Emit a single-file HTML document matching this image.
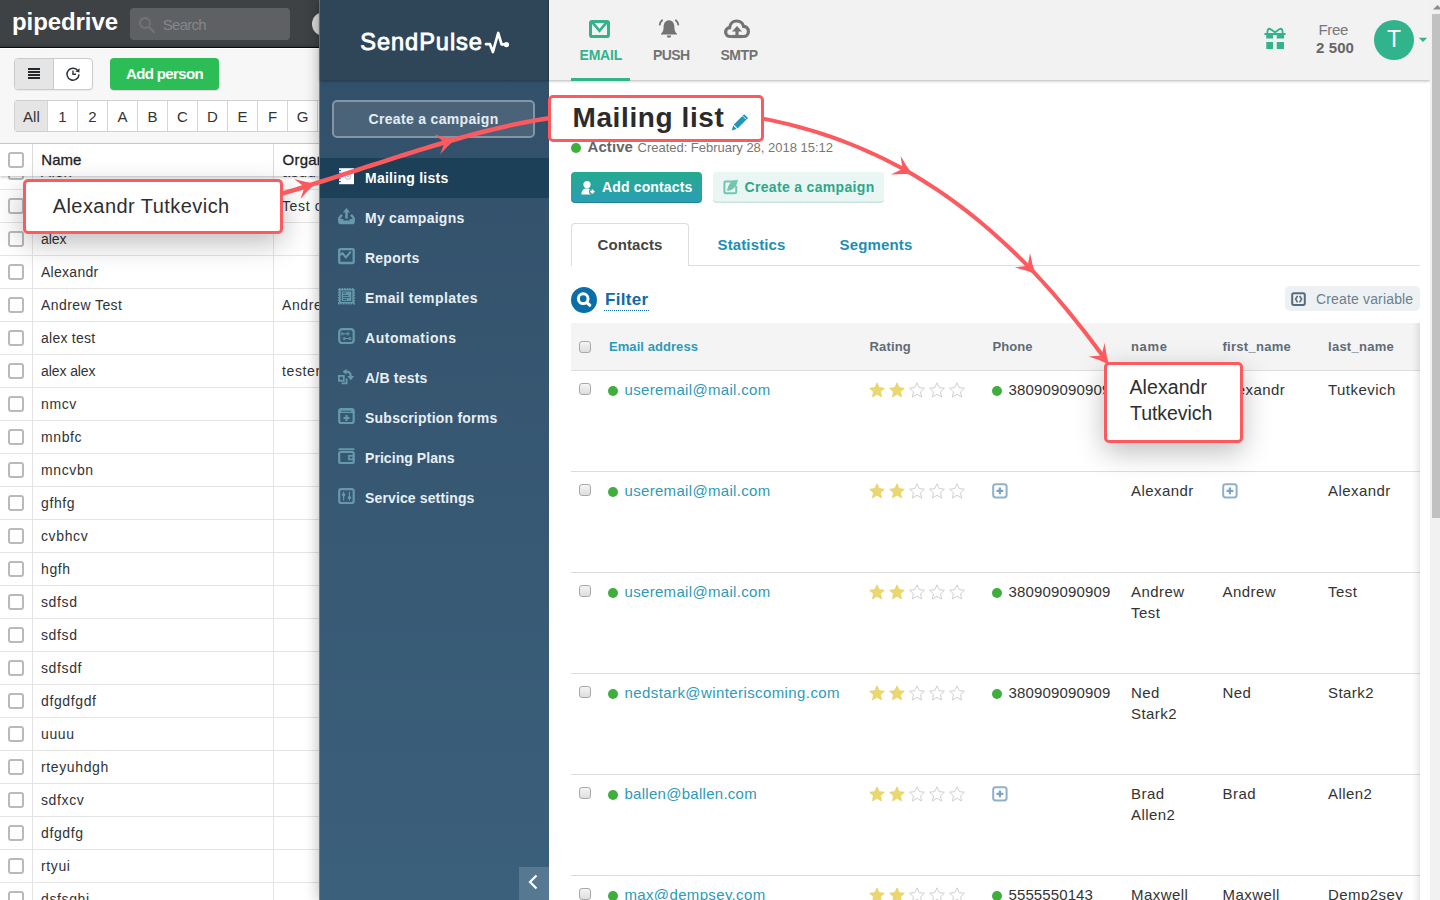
<!DOCTYPE html>
<html lang="en"><head><meta charset="utf-8"><title>Mailing list</title>
<style>
html,body{margin:0;padding:0}body{width:1440px;height:900px;overflow:hidden;position:relative;background:#fff;font-family:'Liberation Sans',sans-serif}
.l{position:absolute;left:0;top:0;width:1440px;height:900px;overflow:hidden}
.l>div,.l>svg,.l>span{position:absolute;display:block}
.t{white-space:pre;line-height:20px}
</style></head>
<body>
<div class="l">
<div style="left:0px;top:0px;width:340px;height:900px;background:#fff"></div>
<div style="left:0px;top:0px;width:340px;height:47px;background:linear-gradient(#3e4245 44px,#34373a 47px);border-bottom:1px solid #0c0d0e"></div>
<div style="left:0px;top:48px;width:340px;height:1px;background:#fff"></div>
<div style="left:130px;top:8px;width:160px;height:32px;background:#5e6064;border-radius:4px"></div>
<svg style="left:138px;top:16px" width="18" height="18" viewBox="0 0 18 18"><circle cx="7" cy="7" r="5" fill="none" stroke="#727477" stroke-width="1.9"/><path d="M10.8 10.8 L16 16" stroke="#727477" stroke-width="2.2" stroke-linecap="round"/></svg>
<div style="left:312px;top:12px;width:24px;height:24px;background:#d9d9d9;border-radius:50%"></div>
<div style="left:0px;top:49px;width:340px;height:94px;background:#f7f7f7"></div>
<div style="left:14px;top:58px;width:79px;height:32px;box-sizing:border-box;border:1px solid #cbcbcb;border-radius:4px;background:#fff;box-shadow:0 1px 1px rgba(0,0,0,.06)"></div>
<div style="left:15px;top:59px;width:38px;height:30px;background:#e5e5e5;border-right:1px solid #cbcbcb;border-radius:3px 0 0 3px"></div>
<svg style="left:28px;top:68px" width="12" height="12" viewBox="0 0 12 12"><path d="M0 1h12M0 4h12M0 7h12M0 10h12" stroke="#26292c" stroke-width="2"/></svg>
<svg style="left:65px;top:66px" width="16" height="16" viewBox="0 0 16 16"><path d="M13.2 5.2 A6 6 0 1 0 14 8.4" fill="none" stroke="#303336" stroke-width="1.5"/><path d="M14.6 2.2 L14.4 6.4 L10.4 5.6 Z" fill="#303336"/><path d="M8 4.5 V8.3 H11" fill="none" stroke="#303336" stroke-width="1.4"/></svg>
<div style="left:110px;top:58px;width:109px;height:32px;background:#2dbd57;border-radius:4px;box-shadow:0 1px 1px rgba(0,0,0,.12)"></div>
<div style="left:14px;top:100px;width:330px;height:32px;box-sizing:border-box;border:1px solid #cfcfcf;border-radius:3px;background:#fff"></div>
<div style="left:15px;top:101px;width:32px;height:30px;background:#e5e5e5;border-radius:2px 0 0 2px"></div>
<div style="left:47px;top:101px;width:1px;height:30px;background:#d6d6d6"></div>
<div style="left:77px;top:101px;width:1px;height:30px;background:#d6d6d6"></div>
<div style="left:107px;top:101px;width:1px;height:30px;background:#d6d6d6"></div>
<div style="left:137px;top:101px;width:1px;height:30px;background:#d6d6d6"></div>
<div style="left:167px;top:101px;width:1px;height:30px;background:#d6d6d6"></div>
<div style="left:197px;top:101px;width:1px;height:30px;background:#d6d6d6"></div>
<div style="left:227px;top:101px;width:1px;height:30px;background:#d6d6d6"></div>
<div style="left:257px;top:101px;width:1px;height:30px;background:#d6d6d6"></div>
<div style="left:287px;top:101px;width:1px;height:30px;background:#d6d6d6"></div>
<div style="left:317px;top:101px;width:1px;height:30px;background:#d6d6d6"></div>
<div style="left:0px;top:143px;width:340px;height:1px;background:#cfcfcf"></div>
<div style="left:8px;top:164px;width:16px;height:16px;box-sizing:border-box;border:2px solid #b9babb;border-radius:3px;background:#fff"></div>
<div style="left:0px;top:189px;width:340px;height:1px;background:#e4e4e4"></div>
<div style="left:8px;top:198px;width:16px;height:16px;box-sizing:border-box;border:2px solid #b9babb;border-radius:3px;background:#fff"></div>
<div style="left:0px;top:222px;width:340px;height:1px;background:#e4e4e4"></div>
<div style="left:8px;top:231px;width:16px;height:16px;box-sizing:border-box;border:2px solid #b9babb;border-radius:3px;background:#fff"></div>
<div style="left:0px;top:255px;width:340px;height:1px;background:#e4e4e4"></div>
<div style="left:8px;top:264px;width:16px;height:16px;box-sizing:border-box;border:2px solid #b9babb;border-radius:3px;background:#fff"></div>
<div style="left:0px;top:288px;width:340px;height:1px;background:#e4e4e4"></div>
<div style="left:8px;top:297px;width:16px;height:16px;box-sizing:border-box;border:2px solid #b9babb;border-radius:3px;background:#fff"></div>
<div style="left:0px;top:321px;width:340px;height:1px;background:#e4e4e4"></div>
<div style="left:8px;top:330px;width:16px;height:16px;box-sizing:border-box;border:2px solid #b9babb;border-radius:3px;background:#fff"></div>
<div style="left:0px;top:354px;width:340px;height:1px;background:#e4e4e4"></div>
<div style="left:8px;top:363px;width:16px;height:16px;box-sizing:border-box;border:2px solid #b9babb;border-radius:3px;background:#fff"></div>
<div style="left:0px;top:387px;width:340px;height:1px;background:#e4e4e4"></div>
<div style="left:8px;top:396px;width:16px;height:16px;box-sizing:border-box;border:2px solid #b9babb;border-radius:3px;background:#fff"></div>
<div style="left:0px;top:420px;width:340px;height:1px;background:#e4e4e4"></div>
<div style="left:8px;top:429px;width:16px;height:16px;box-sizing:border-box;border:2px solid #b9babb;border-radius:3px;background:#fff"></div>
<div style="left:0px;top:453px;width:340px;height:1px;background:#e4e4e4"></div>
<div style="left:8px;top:462px;width:16px;height:16px;box-sizing:border-box;border:2px solid #b9babb;border-radius:3px;background:#fff"></div>
<div style="left:0px;top:486px;width:340px;height:1px;background:#e4e4e4"></div>
<div style="left:8px;top:495px;width:16px;height:16px;box-sizing:border-box;border:2px solid #b9babb;border-radius:3px;background:#fff"></div>
<div style="left:0px;top:519px;width:340px;height:1px;background:#e4e4e4"></div>
<div style="left:8px;top:528px;width:16px;height:16px;box-sizing:border-box;border:2px solid #b9babb;border-radius:3px;background:#fff"></div>
<div style="left:0px;top:552px;width:340px;height:1px;background:#e4e4e4"></div>
<div style="left:8px;top:561px;width:16px;height:16px;box-sizing:border-box;border:2px solid #b9babb;border-radius:3px;background:#fff"></div>
<div style="left:0px;top:585px;width:340px;height:1px;background:#e4e4e4"></div>
<div style="left:8px;top:594px;width:16px;height:16px;box-sizing:border-box;border:2px solid #b9babb;border-radius:3px;background:#fff"></div>
<div style="left:0px;top:618px;width:340px;height:1px;background:#e4e4e4"></div>
<div style="left:8px;top:627px;width:16px;height:16px;box-sizing:border-box;border:2px solid #b9babb;border-radius:3px;background:#fff"></div>
<div style="left:0px;top:651px;width:340px;height:1px;background:#e4e4e4"></div>
<div style="left:8px;top:660px;width:16px;height:16px;box-sizing:border-box;border:2px solid #b9babb;border-radius:3px;background:#fff"></div>
<div style="left:0px;top:684px;width:340px;height:1px;background:#e4e4e4"></div>
<div style="left:8px;top:693px;width:16px;height:16px;box-sizing:border-box;border:2px solid #b9babb;border-radius:3px;background:#fff"></div>
<div style="left:0px;top:717px;width:340px;height:1px;background:#e4e4e4"></div>
<div style="left:8px;top:726px;width:16px;height:16px;box-sizing:border-box;border:2px solid #b9babb;border-radius:3px;background:#fff"></div>
<div style="left:0px;top:750px;width:340px;height:1px;background:#e4e4e4"></div>
<div style="left:8px;top:759px;width:16px;height:16px;box-sizing:border-box;border:2px solid #b9babb;border-radius:3px;background:#fff"></div>
<div style="left:0px;top:783px;width:340px;height:1px;background:#e4e4e4"></div>
<div style="left:8px;top:792px;width:16px;height:16px;box-sizing:border-box;border:2px solid #b9babb;border-radius:3px;background:#fff"></div>
<div style="left:0px;top:816px;width:340px;height:1px;background:#e4e4e4"></div>
<div style="left:8px;top:825px;width:16px;height:16px;box-sizing:border-box;border:2px solid #b9babb;border-radius:3px;background:#fff"></div>
<div style="left:0px;top:849px;width:340px;height:1px;background:#e4e4e4"></div>
<div style="left:8px;top:858px;width:16px;height:16px;box-sizing:border-box;border:2px solid #b9babb;border-radius:3px;background:#fff"></div>
<div style="left:0px;top:882px;width:340px;height:1px;background:#e4e4e4"></div>
<div style="left:8px;top:891px;width:16px;height:16px;box-sizing:border-box;border:2px solid #b9babb;border-radius:3px;background:#fff"></div>
<div style="left:32px;top:176px;width:1px;height:724px;background:#e4e4e4"></div>
<div style="left:273px;top:176px;width:1px;height:724px;background:#e4e4e4"></div>
<div style="left:0px;top:144px;width:340px;height:32px;background:#fff;box-shadow:0 1px 3px rgba(0,0,0,.25)"></div>
<div style="left:32px;top:144px;width:1px;height:32px;background:#dcdcdc"></div>
<div style="left:273px;top:144px;width:1px;height:32px;background:#dcdcdc"></div>
<div style="left:8px;top:152px;width:16px;height:16px;box-sizing:border-box;border:2px solid #b9babb;border-radius:3px;background:#fff"></div>
<span class="t" style="left:12.00px;top:12.18px;font-size:24px;font-weight:700;color:#fff;letter-spacing:-0.078px;">pipedrive</span>
<span class="t" style="left:162.80px;top:14.70px;font-size:15px;font-weight:400;color:#85878a;letter-spacing:-0.755px;">Search</span>
<span class="t" style="left:126.00px;top:64.00px;font-size:15px;font-weight:700;color:#fff;letter-spacing:-0.634px;">Add person</span>
<span class="t" style="left:23.00px;top:106.80px;font-size:15px;font-weight:400;color:#333;letter-spacing:0.109px;">All</span>
<span class="t" style="left:47.50px;top:106.80px;font-size:15px;font-weight:400;color:#333;letter-spacing:0.000px;width:30px;text-align:center;">1</span>
<span class="t" style="left:77.50px;top:106.80px;font-size:15px;font-weight:400;color:#333;letter-spacing:0.000px;width:30px;text-align:center;">2</span>
<span class="t" style="left:107.50px;top:106.80px;font-size:15px;font-weight:400;color:#333;letter-spacing:0.000px;width:30px;text-align:center;">A</span>
<span class="t" style="left:137.50px;top:106.80px;font-size:15px;font-weight:400;color:#333;letter-spacing:0.000px;width:30px;text-align:center;">B</span>
<span class="t" style="left:167.50px;top:106.80px;font-size:15px;font-weight:400;color:#333;letter-spacing:0.000px;width:30px;text-align:center;">C</span>
<span class="t" style="left:197.50px;top:106.80px;font-size:15px;font-weight:400;color:#333;letter-spacing:0.000px;width:30px;text-align:center;">D</span>
<span class="t" style="left:227.50px;top:106.80px;font-size:15px;font-weight:400;color:#333;letter-spacing:0.000px;width:30px;text-align:center;">E</span>
<span class="t" style="left:257.50px;top:106.80px;font-size:15px;font-weight:400;color:#333;letter-spacing:0.000px;width:30px;text-align:center;">F</span>
<span class="t" style="left:287.50px;top:106.80px;font-size:15px;font-weight:400;color:#333;letter-spacing:0.000px;width:30px;text-align:center;">G</span>
<span class="t" style="left:317.50px;top:106.80px;font-size:15px;font-weight:400;color:#333;letter-spacing:0.000px;width:30px;text-align:center;">H</span>
<span class="t" style="left:41.00px;top:162.30px;font-size:15px;font-weight:400;color:#333;letter-spacing:0.450px;clip-path:inset(13.7px 0 0 0);">Alex</span>
<span class="t" style="left:282.00px;top:162.30px;font-size:15px;font-weight:400;color:#333;letter-spacing:0.450px;clip-path:inset(13.7px 0 0 0);">asdd</span>
<span class="t" style="left:282.00px;top:196.35px;font-size:14px;font-weight:400;color:#303336;letter-spacing:0.620px;">Test c</span>
<span class="t" style="left:41.00px;top:229.35px;font-size:14px;font-weight:400;color:#303336;letter-spacing:-0.047px;">alex</span>
<span class="t" style="left:41.00px;top:262.35px;font-size:14px;font-weight:400;color:#303336;letter-spacing:0.279px;">Alexandr</span>
<span class="t" style="left:41.00px;top:295.35px;font-size:14px;font-weight:400;color:#303336;letter-spacing:0.411px;">Andrew Test</span>
<span class="t" style="left:282.00px;top:295.35px;font-size:14px;font-weight:400;color:#303336;letter-spacing:0.620px;">Andre</span>
<span class="t" style="left:41.00px;top:328.35px;font-size:14px;font-weight:400;color:#303336;letter-spacing:0.240px;">alex test</span>
<span class="t" style="left:41.00px;top:361.35px;font-size:14px;font-weight:400;color:#303336;letter-spacing:-0.085px;">alex alex</span>
<span class="t" style="left:282.00px;top:361.35px;font-size:14px;font-weight:400;color:#303336;letter-spacing:0.620px;">tester</span>
<span class="t" style="left:41.00px;top:394.35px;font-size:14px;font-weight:400;color:#303336;letter-spacing:0.620px;">nmcv</span>
<span class="t" style="left:41.00px;top:427.35px;font-size:14px;font-weight:400;color:#303336;letter-spacing:0.620px;">mnbfc</span>
<span class="t" style="left:41.00px;top:460.35px;font-size:14px;font-weight:400;color:#303336;letter-spacing:0.620px;">mncvbn</span>
<span class="t" style="left:41.00px;top:493.35px;font-size:14px;font-weight:400;color:#303336;letter-spacing:0.620px;">gfhfg</span>
<span class="t" style="left:41.00px;top:526.35px;font-size:14px;font-weight:400;color:#303336;letter-spacing:0.620px;">cvbhcv</span>
<span class="t" style="left:41.00px;top:559.35px;font-size:14px;font-weight:400;color:#303336;letter-spacing:0.620px;">hgfh</span>
<span class="t" style="left:41.00px;top:592.35px;font-size:14px;font-weight:400;color:#303336;letter-spacing:0.620px;">sdfsd</span>
<span class="t" style="left:41.00px;top:625.35px;font-size:14px;font-weight:400;color:#303336;letter-spacing:0.620px;">sdfsd</span>
<span class="t" style="left:41.00px;top:658.35px;font-size:14px;font-weight:400;color:#303336;letter-spacing:0.620px;">sdfsdf</span>
<span class="t" style="left:41.00px;top:691.35px;font-size:14px;font-weight:400;color:#303336;letter-spacing:0.620px;">dfgdfgdf</span>
<span class="t" style="left:41.00px;top:724.35px;font-size:14px;font-weight:400;color:#303336;letter-spacing:0.620px;">uuuu</span>
<span class="t" style="left:41.00px;top:757.35px;font-size:14px;font-weight:400;color:#303336;letter-spacing:0.620px;">rteyuhdgh</span>
<span class="t" style="left:41.00px;top:790.35px;font-size:14px;font-weight:400;color:#303336;letter-spacing:0.620px;">sdfxcv</span>
<span class="t" style="left:41.00px;top:823.35px;font-size:14px;font-weight:400;color:#303336;letter-spacing:0.620px;">dfgdfg</span>
<span class="t" style="left:41.00px;top:856.35px;font-size:14px;font-weight:400;color:#303336;letter-spacing:0.620px;">rtyui</span>
<span class="t" style="left:41.00px;top:889.35px;font-size:14px;font-weight:400;color:#303336;letter-spacing:0.620px;">dsfsghj</span>
<span class="t" style="left:41.30px;top:149.80px;font-size:15px;font-weight:400;color:#1e2226;letter-spacing:-0.004px;-webkit-text-stroke:0.3px #1e2226;">Name</span>
<span class="t" style="left:282.50px;top:149.80px;font-size:15px;font-weight:400;color:#1e2226;letter-spacing:0.250px;-webkit-text-stroke:0.3px #1e2226;">Organization</span>
</div>
<div class="l">
<div style="left:319px;top:0px;width:1121px;height:900px;background:#fff;box-shadow:-2px 0 12px rgba(0,0,0,.23)"></div>
<div style="left:319px;top:0px;width:1px;height:900px;background:#2b8de3"></div>
<div style="left:320px;top:0px;width:229px;height:900px;background:linear-gradient(#33506a 80px,#3b607c 900px)"></div>
<div style="left:320px;top:0px;width:229px;height:80px;background:#2f4558;box-shadow:0 1px 3px rgba(0,0,0,.35)"></div>
<svg style="left:484px;top:30px" width="28" height="26" viewBox="0 0 28 26"><path d="M2 14.2 H6 L8.9 22 L14.2 3 L17.6 14.3 H21" fill="none" stroke="#fff" stroke-width="2.7" stroke-linejoin="round" stroke-linecap="round"/><circle cx="22.4" cy="14.6" r="2.7" fill="#fff"/></svg>
<div style="left:332px;top:100px;width:203px;height:38px;box-sizing:border-box;border:2px solid #8496a5;border-radius:5px;background:#4b6379"></div>
<div style="left:320px;top:158px;width:229px;height:40px;background:#1c4058"></div>
<svg style="left:338px;top:167.8px" width="17" height="17" viewBox="0 0 17 17"><rect x="1" y="0.2" width="15" height="16" fill="#fff"/><path d="M0.6 2.6h2.2M0.6 5.4h2.2M0.6 10.8h2.2M0.6 13.6h2.2" stroke="#2a4bd0" stroke-width="1.1"/><circle cx="10" cy="8.6" r="2.7" fill="none" stroke="#9fb3c8" stroke-width="0.9"/><circle cx="10" cy="8.6" r="0.9" fill="#9fb3c8"/></svg>
<svg style="left:338px;top:207.8px" width="17" height="17" viewBox="0 0 17 17"><path d="M3.9 6.6 L1.3 10.2 V13.2 Q1.3 15.1 3.2 15.1 H13.8 Q15.7 15.1 15.7 13.2 V10.2 L13.1 6.6" fill="none" stroke="#6699ac" stroke-width="2.4" stroke-linejoin="round"/><path d="M1.5 11 H5.4 V12.6 H11.6 V11 H15.5 V14.6 H1.5Z" fill="#6699ac"/><path d="M8.5 10.6 V3.6" stroke="#6699ac" stroke-width="2.5"/><path d="M4.9 4.4 L8.5 0 L12.1 4.4 Z" fill="#6699ac"/></svg>
<svg style="left:338px;top:247.8px" width="17" height="17" viewBox="0 0 17 17"><rect x="1.2" y="1.2" width="14.5" height="13.8" rx="1" fill="none" stroke="#6699ac" stroke-width="2.3"/><path d="M1.6 7 L4.6 5.4 L7.8 9.4 L12.8 3.6" fill="none" stroke="#6699ac" stroke-width="2.1"/></svg>
<svg style="left:338px;top:287.8px" width="17" height="17" viewBox="0 0 17 17"><rect x="1" y="1" width="15" height="14.4" fill="#6699ac" stroke="#6699ac" stroke-width="2" stroke-dasharray="1.5 1.1"/><rect x="3.2" y="3" width="10.6" height="10.4" fill="none" stroke="#36566f" stroke-width="1"/><path d="M5 5.2h3.4M5 7.6h5.6M5 9.6h6.6M5 11.4h4" stroke="#36566f" stroke-width="1"/></svg>
<svg style="left:338px;top:327.8px" width="17" height="17" viewBox="0 0 17 17"><rect x="1.2" y="1.2" width="14.5" height="13.8" rx="3" fill="none" stroke="#6699ac" stroke-width="2.2"/><path d="M4 5.8h6M6 10.6h6" stroke="#6699ac" stroke-width="1"/><circle cx="4.2" cy="5.8" r="1.2" fill="none" stroke="#6699ac" stroke-width="0.9"/><circle cx="10" cy="5.8" r="1.2" fill="none" stroke="#6699ac" stroke-width="0.9"/><circle cx="6.2" cy="10.6" r="1.2" fill="none" stroke="#6699ac" stroke-width="0.9"/><circle cx="12" cy="10.6" r="1.2" fill="none" stroke="#6699ac" stroke-width="0.9"/></svg>
<svg style="left:338px;top:367.8px" width="17" height="17" viewBox="0 0 17 17"><rect x="0.9" y="7.9" width="4.9" height="4.9" fill="none" stroke="#6699ac" stroke-width="1.8"/><path d="M3.6 15.4 H8.6 V10.6" fill="none" stroke="#6699ac" stroke-width="1.8"/><path d="M7.6 3.8 Q12.6 3 12.8 8.4" fill="none" stroke="#6699ac" stroke-width="2.2"/><path d="M4.6 3.8 L8.4 0.8 V6.8Z" fill="#6699ac"/><path d="M9.4 8 H16.2 L12.8 12.2Z" fill="#6699ac"/></svg>
<svg style="left:338px;top:407.8px" width="17" height="17" viewBox="0 0 17 17"><rect x="1.2" y="1.2" width="14.5" height="13.8" rx="2" fill="none" stroke="#6699ac" stroke-width="2.2"/><path d="M1.5 3.6h14" stroke="#6699ac" stroke-width="2.8"/><path d="M3.4 3.4h9.6" stroke="#36566f" stroke-width="0.8"/><path d="M8.5 7v6M5.5 10h6" stroke="#6699ac" stroke-width="2.1"/></svg>
<svg style="left:338px;top:447.8px" width="17" height="17" viewBox="0 0 17 17"><path d="M1.4 1.2 H15.6" stroke="#6699ac" stroke-width="2" stroke-linecap="round"/><rect x="1.2" y="4" width="14.5" height="11" rx="1.5" fill="none" stroke="#6699ac" stroke-width="2.2"/><rect x="11" y="7.8" width="4.6" height="3.6" fill="none" stroke="#6699ac" stroke-width="1.7"/></svg>
<svg style="left:338px;top:487.8px" width="17" height="17" viewBox="0 0 17 17"><rect x="1.2" y="1.2" width="14.5" height="13.8" rx="2" fill="none" stroke="#6699ac" stroke-width="2.2"/><path d="M5.6 3.8v8.8M11.4 3.8v8.8" stroke="#6699ac" stroke-width="1.2"/><circle cx="5.6" cy="6.8" r="1.7" fill="#6699ac"/><circle cx="11.4" cy="9.6" r="1.7" fill="#6699ac"/></svg>
<div style="left:519px;top:867px;width:30px;height:33px;background:#567890"></div>
<svg style="left:527px;top:874px" width="12" height="16" viewBox="0 0 12 16"><path d="M9.5 1.5 L3 8 L9.5 14.5" fill="none" stroke="#fff" stroke-width="2.2"/></svg>
<div style="left:549px;top:0px;width:881px;height:80px;background:#f2f2f2;box-shadow:0 1px 3px rgba(0,0,0,.3)"></div>
<svg style="left:588px;top:19px" width="24" height="20" viewBox="0 0 24 20"><rect x="2.5" y="2.5" width="18" height="15" rx="1.6" fill="none" stroke="#32b38c" stroke-width="3"/><path d="M4.6 3.6 L11.5 11.8 L18.4 3.6" fill="none" stroke="#32b38c" stroke-width="2.6"/></svg>
<div style="left:571px;top:78px;width:59px;height:3px;background:#32b38c"></div>
<svg style="left:658px;top:18px" width="22" height="22" viewBox="0 0 22 22"><path d="M11 2.2 C6.8 2.2 5.6 6 5.6 9.5 C5.6 13 4.4 14.4 3 15.8 V16.6 H19 V15.8 C17.6 14.4 16.4 13 16.4 9.5 C16.4 6 15.2 2.2 11 2.2Z" fill="#737373"/><path d="M8.8 17.6 A2.2 2.2 0 0 0 13.2 17.6Z" fill="#737373"/><path d="M4.6 1.8 Q2 4 1.6 7.4" fill="none" stroke="#737373" stroke-width="1.8"/><path d="M17.4 1.8 Q20 4 20.4 7.4" fill="none" stroke="#737373" stroke-width="1.8"/></svg>
<svg style="left:724px;top:19px" width="26" height="20" viewBox="0 0 26 20"><path d="M7 17.5 H6.4 C3.6 17.5 1.6 15.6 1.6 13 C1.6 10.6 3.4 8.9 5.6 8.7 C6 4.9 8.8 2 12.6 2 C16 2 18.8 4.2 19.6 7.4 C22.4 7.6 24.4 9.7 24.4 12.4 C24.4 15.3 22.2 17.5 19.4 17.5 H18" fill="none" stroke="#737373" stroke-width="3.2" stroke-linecap="round"/><path d="M13 17.6 V11.5" stroke="#737373" stroke-width="3.2"/><path d="M8 12.6 L13 7 L18 12.6 Z" fill="#737373"/><path d="M8 17.5h10" stroke="#737373" stroke-width="3.2"/></svg>
<svg style="left:1263px;top:26px" width="24" height="24" viewBox="0 0 24 24"><rect x="1.25" y="7" width="21.5" height="2" rx="0.8" fill="#32b38c"/><rect x="3.25" y="8" width="6.75" height="4.5" fill="#32b38c"/><rect x="13.75" y="8" width="7.25" height="4.5" fill="#32b38c"/><rect x="3.25" y="16" width="6.75" height="7" fill="#32b38c"/><rect x="13.75" y="16" width="7.25" height="7" fill="#32b38c"/><path d="M4.3 7.6 Q4.4 2.7 6.2 2.7 Q7.4 2.7 12 6.3 Q16.6 2.7 17.8 2.7 Q19.6 2.7 19.7 7.6" fill="none" stroke="#32b38c" stroke-width="1.9"/></svg>
<div style="left:1374px;top:20px;width:40px;height:40px;background:#31b38d;border-radius:50%"></div>
<svg style="left:1418px;top:37px" width="10" height="6" viewBox="0 0 10 6"><path d="M0.8 0.8 H9.2 L5 5Z" fill="#32b38c"/></svg>
<div style="left:1430px;top:0px;width:10px;height:900px;background:#f1f1f1"></div>
<div style="left:1432px;top:14px;width:8px;height:504px;background:#c1c1c1"></div>
<svg style="left:1433px;top:5px" width="7" height="5" viewBox="0 0 7 5"><path d="M0 4.5 L4.5 0 L9 4.5Z" fill="#8c8c8c"/></svg>
<div style="left:571px;top:143px;width:10px;height:10px;background:#3fae3c;border-radius:50%"></div>
<div style="left:571px;top:172px;width:131px;height:31px;background:linear-gradient(#25ab8e,#2a9db6);border-radius:4px;box-shadow:inset 0 -1px 0 rgba(0,0,0,.15)"></div>
<svg style="left:581px;top:180px" width="16" height="15" viewBox="0 0 16 15"><circle cx="6" cy="4.6" r="3.6" fill="#fff"/><path d="M0.4 14.4 C0.4 10.4 2.6 8.6 6 8.6 C8 8.6 9.4 9.2 10.4 10.4 V14.4Z" fill="#fff"/><circle cx="11.4" cy="11.6" r="3.4" fill="#27a3a2"/><path d="M11.4 9.4v4.4M9.2 11.6h4.4" stroke="#fff" stroke-width="1.6"/></svg>
<div style="left:713px;top:172px;width:171px;height:31px;background:#eaf6f3;border-radius:4px;box-shadow:inset 0 -1.5px 0 #cbe5de"></div>
<svg style="left:723px;top:179px" width="16" height="16" viewBox="0 0 16 16"><path d="M11 2.4 H2.6 Q1.4 2.4 1.4 3.6 V13 Q1.4 14.2 2.6 14.2 H12 Q13.2 14.2 13.2 13 V7" fill="none" stroke="#72c6b1" stroke-width="2"/><path d="M14.8 0.8 C8.6 1 5 5 4 12 C10 11.4 14.2 7.4 14.8 0.8Z" fill="#72c6b1"/></svg>
<div style="left:571px;top:265px;width:849px;height:1px;background:#ddd"></div>
<div style="left:571px;top:223px;width:118px;height:43px;box-sizing:border-box;border:1px solid #ddd;border-bottom:0;border-radius:4px 4px 0 0;background:#fff"></div>
<div style="left:571px;top:287px;width:26px;height:26px;background:#0a6ea8;border-radius:50%"></div>
<svg style="left:576px;top:292px" width="17" height="17" viewBox="0 0 17 17"><circle cx="7.2" cy="6.7" r="4.85" fill="none" stroke="#fff" stroke-width="3"/><path d="M11.2 10.8 L13.7 13.2" stroke="#fff" stroke-width="3.2" stroke-linecap="round"/></svg>
<div style="left:604px;top:309.7px;width:45px;height:1.6px;background:repeating-linear-gradient(90deg,#106aa8 0 1px,transparent 1px 2px)"></div>
<div style="left:1285px;top:286px;width:135px;height:25px;background:#edf1f4;border-radius:5px"></div>
<svg style="left:1291px;top:291.6px" width="16" height="15" viewBox="0 0 16 15"><rect x="1.2" y="1.3" width="12.6" height="11.6" rx="1.6" fill="none" stroke="#566b7c" stroke-width="2"/><path d="M6.6 3.8 L4.6 7.1 L6.6 10.4 M8.6 3.8 L10.6 7.1 L8.6 10.4" fill="none" stroke="#566b7c" stroke-width="1.6"/></svg>
<div style="left:571px;top:323px;width:849px;height:47px;background:#f4f4f4;border-bottom:1px solid #ddd"></div>
<div style="left:579px;top:341px;width:12px;height:12px;box-sizing:border-box;border:1px solid #a9a9a9;border-radius:3px;background:linear-gradient(#f4f4f4,#dedede)"></div>
<div style="left:579px;top:383.3px;width:12px;height:12px;box-sizing:border-box;border:1px solid #a9a9a9;border-radius:3px;background:linear-gradient(#f4f4f4,#dedede)"></div>
<div style="left:608px;top:386px;width:10px;height:10px;background:#40ae3d;border-radius:50%"></div>
<svg style="left:869px;top:382px" width="100" height="16" viewBox="0 0 100 16"><path transform="translate(0,0)" d="M8 0.8 L10.2 5.6 L15.4 6.2 L11.5 9.8 L12.6 15 L8 12.3 L3.4 15 L4.5 9.8 L0.6 6.2 L5.8 5.6 Z" fill="#ead76e" stroke="#e3cd5a" stroke-width="0.6"/><path transform="translate(20,0)" d="M8 0.8 L10.2 5.6 L15.4 6.2 L11.5 9.8 L12.6 15 L8 12.3 L3.4 15 L4.5 9.8 L0.6 6.2 L5.8 5.6 Z" fill="#ead76e" stroke="#e3cd5a" stroke-width="0.6"/><path transform="translate(40,0)" d="M8 0.8 L10.2 5.6 L15.4 6.2 L11.5 9.8 L12.6 15 L8 12.3 L3.4 15 L4.5 9.8 L0.6 6.2 L5.8 5.6 Z" fill="#fff" stroke="#cfcfcf" stroke-width="1"/><path transform="translate(60,0)" d="M8 0.8 L10.2 5.6 L15.4 6.2 L11.5 9.8 L12.6 15 L8 12.3 L3.4 15 L4.5 9.8 L0.6 6.2 L5.8 5.6 Z" fill="#fff" stroke="#cfcfcf" stroke-width="1"/><path transform="translate(80,0)" d="M8 0.8 L10.2 5.6 L15.4 6.2 L11.5 9.8 L12.6 15 L8 12.3 L3.4 15 L4.5 9.8 L0.6 6.2 L5.8 5.6 Z" fill="#fff" stroke="#cfcfcf" stroke-width="1"/></svg>
<div style="left:992px;top:386px;width:10px;height:10px;background:#40ae3d;border-radius:50%"></div>
<div style="left:571px;top:471px;width:849px;height:1px;background:#ddd"></div>
<div style="left:579px;top:484.3px;width:12px;height:12px;box-sizing:border-box;border:1px solid #a9a9a9;border-radius:3px;background:linear-gradient(#f4f4f4,#dedede)"></div>
<div style="left:608px;top:487px;width:10px;height:10px;background:#40ae3d;border-radius:50%"></div>
<svg style="left:869px;top:483px" width="100" height="16" viewBox="0 0 100 16"><path transform="translate(0,0)" d="M8 0.8 L10.2 5.6 L15.4 6.2 L11.5 9.8 L12.6 15 L8 12.3 L3.4 15 L4.5 9.8 L0.6 6.2 L5.8 5.6 Z" fill="#ead76e" stroke="#e3cd5a" stroke-width="0.6"/><path transform="translate(20,0)" d="M8 0.8 L10.2 5.6 L15.4 6.2 L11.5 9.8 L12.6 15 L8 12.3 L3.4 15 L4.5 9.8 L0.6 6.2 L5.8 5.6 Z" fill="#ead76e" stroke="#e3cd5a" stroke-width="0.6"/><path transform="translate(40,0)" d="M8 0.8 L10.2 5.6 L15.4 6.2 L11.5 9.8 L12.6 15 L8 12.3 L3.4 15 L4.5 9.8 L0.6 6.2 L5.8 5.6 Z" fill="#fff" stroke="#cfcfcf" stroke-width="1"/><path transform="translate(60,0)" d="M8 0.8 L10.2 5.6 L15.4 6.2 L11.5 9.8 L12.6 15 L8 12.3 L3.4 15 L4.5 9.8 L0.6 6.2 L5.8 5.6 Z" fill="#fff" stroke="#cfcfcf" stroke-width="1"/><path transform="translate(80,0)" d="M8 0.8 L10.2 5.6 L15.4 6.2 L11.5 9.8 L12.6 15 L8 12.3 L3.4 15 L4.5 9.8 L0.6 6.2 L5.8 5.6 Z" fill="#fff" stroke="#cfcfcf" stroke-width="1"/></svg>
<svg style="left:991.7px;top:483px" width="16" height="16" viewBox="0 0 16 16"><rect x="1.2" y="1.2" width="13.4" height="13.2" rx="2.4" fill="#fff" stroke="#90b1c8" stroke-width="2"/><path d="M7.9 4.4v6.8M4.5 7.8h6.8" stroke="#7ba4c1" stroke-width="2.2"/></svg>
<svg style="left:1222.2px;top:483px" width="16" height="16" viewBox="0 0 16 16"><rect x="1.2" y="1.2" width="13.4" height="13.2" rx="2.4" fill="#fff" stroke="#90b1c8" stroke-width="2"/><path d="M7.9 4.4v6.8M4.5 7.8h6.8" stroke="#7ba4c1" stroke-width="2.2"/></svg>
<div style="left:571px;top:572px;width:849px;height:1px;background:#ddd"></div>
<div style="left:579px;top:585.3px;width:12px;height:12px;box-sizing:border-box;border:1px solid #a9a9a9;border-radius:3px;background:linear-gradient(#f4f4f4,#dedede)"></div>
<div style="left:608px;top:588px;width:10px;height:10px;background:#40ae3d;border-radius:50%"></div>
<svg style="left:869px;top:584px" width="100" height="16" viewBox="0 0 100 16"><path transform="translate(0,0)" d="M8 0.8 L10.2 5.6 L15.4 6.2 L11.5 9.8 L12.6 15 L8 12.3 L3.4 15 L4.5 9.8 L0.6 6.2 L5.8 5.6 Z" fill="#ead76e" stroke="#e3cd5a" stroke-width="0.6"/><path transform="translate(20,0)" d="M8 0.8 L10.2 5.6 L15.4 6.2 L11.5 9.8 L12.6 15 L8 12.3 L3.4 15 L4.5 9.8 L0.6 6.2 L5.8 5.6 Z" fill="#ead76e" stroke="#e3cd5a" stroke-width="0.6"/><path transform="translate(40,0)" d="M8 0.8 L10.2 5.6 L15.4 6.2 L11.5 9.8 L12.6 15 L8 12.3 L3.4 15 L4.5 9.8 L0.6 6.2 L5.8 5.6 Z" fill="#fff" stroke="#cfcfcf" stroke-width="1"/><path transform="translate(60,0)" d="M8 0.8 L10.2 5.6 L15.4 6.2 L11.5 9.8 L12.6 15 L8 12.3 L3.4 15 L4.5 9.8 L0.6 6.2 L5.8 5.6 Z" fill="#fff" stroke="#cfcfcf" stroke-width="1"/><path transform="translate(80,0)" d="M8 0.8 L10.2 5.6 L15.4 6.2 L11.5 9.8 L12.6 15 L8 12.3 L3.4 15 L4.5 9.8 L0.6 6.2 L5.8 5.6 Z" fill="#fff" stroke="#cfcfcf" stroke-width="1"/></svg>
<div style="left:992px;top:588px;width:10px;height:10px;background:#40ae3d;border-radius:50%"></div>
<div style="left:571px;top:673px;width:849px;height:1px;background:#ddd"></div>
<div style="left:579px;top:686.3px;width:12px;height:12px;box-sizing:border-box;border:1px solid #a9a9a9;border-radius:3px;background:linear-gradient(#f4f4f4,#dedede)"></div>
<div style="left:608px;top:689px;width:10px;height:10px;background:#40ae3d;border-radius:50%"></div>
<svg style="left:869px;top:685px" width="100" height="16" viewBox="0 0 100 16"><path transform="translate(0,0)" d="M8 0.8 L10.2 5.6 L15.4 6.2 L11.5 9.8 L12.6 15 L8 12.3 L3.4 15 L4.5 9.8 L0.6 6.2 L5.8 5.6 Z" fill="#ead76e" stroke="#e3cd5a" stroke-width="0.6"/><path transform="translate(20,0)" d="M8 0.8 L10.2 5.6 L15.4 6.2 L11.5 9.8 L12.6 15 L8 12.3 L3.4 15 L4.5 9.8 L0.6 6.2 L5.8 5.6 Z" fill="#ead76e" stroke="#e3cd5a" stroke-width="0.6"/><path transform="translate(40,0)" d="M8 0.8 L10.2 5.6 L15.4 6.2 L11.5 9.8 L12.6 15 L8 12.3 L3.4 15 L4.5 9.8 L0.6 6.2 L5.8 5.6 Z" fill="#fff" stroke="#cfcfcf" stroke-width="1"/><path transform="translate(60,0)" d="M8 0.8 L10.2 5.6 L15.4 6.2 L11.5 9.8 L12.6 15 L8 12.3 L3.4 15 L4.5 9.8 L0.6 6.2 L5.8 5.6 Z" fill="#fff" stroke="#cfcfcf" stroke-width="1"/><path transform="translate(80,0)" d="M8 0.8 L10.2 5.6 L15.4 6.2 L11.5 9.8 L12.6 15 L8 12.3 L3.4 15 L4.5 9.8 L0.6 6.2 L5.8 5.6 Z" fill="#fff" stroke="#cfcfcf" stroke-width="1"/></svg>
<div style="left:992px;top:689px;width:10px;height:10px;background:#40ae3d;border-radius:50%"></div>
<div style="left:571px;top:774px;width:849px;height:1px;background:#ddd"></div>
<div style="left:579px;top:787.3px;width:12px;height:12px;box-sizing:border-box;border:1px solid #a9a9a9;border-radius:3px;background:linear-gradient(#f4f4f4,#dedede)"></div>
<div style="left:608px;top:790px;width:10px;height:10px;background:#40ae3d;border-radius:50%"></div>
<svg style="left:869px;top:786px" width="100" height="16" viewBox="0 0 100 16"><path transform="translate(0,0)" d="M8 0.8 L10.2 5.6 L15.4 6.2 L11.5 9.8 L12.6 15 L8 12.3 L3.4 15 L4.5 9.8 L0.6 6.2 L5.8 5.6 Z" fill="#ead76e" stroke="#e3cd5a" stroke-width="0.6"/><path transform="translate(20,0)" d="M8 0.8 L10.2 5.6 L15.4 6.2 L11.5 9.8 L12.6 15 L8 12.3 L3.4 15 L4.5 9.8 L0.6 6.2 L5.8 5.6 Z" fill="#ead76e" stroke="#e3cd5a" stroke-width="0.6"/><path transform="translate(40,0)" d="M8 0.8 L10.2 5.6 L15.4 6.2 L11.5 9.8 L12.6 15 L8 12.3 L3.4 15 L4.5 9.8 L0.6 6.2 L5.8 5.6 Z" fill="#fff" stroke="#cfcfcf" stroke-width="1"/><path transform="translate(60,0)" d="M8 0.8 L10.2 5.6 L15.4 6.2 L11.5 9.8 L12.6 15 L8 12.3 L3.4 15 L4.5 9.8 L0.6 6.2 L5.8 5.6 Z" fill="#fff" stroke="#cfcfcf" stroke-width="1"/><path transform="translate(80,0)" d="M8 0.8 L10.2 5.6 L15.4 6.2 L11.5 9.8 L12.6 15 L8 12.3 L3.4 15 L4.5 9.8 L0.6 6.2 L5.8 5.6 Z" fill="#fff" stroke="#cfcfcf" stroke-width="1"/></svg>
<svg style="left:991.7px;top:786px" width="16" height="16" viewBox="0 0 16 16"><rect x="1.2" y="1.2" width="13.4" height="13.2" rx="2.4" fill="#fff" stroke="#90b1c8" stroke-width="2"/><path d="M7.9 4.4v6.8M4.5 7.8h6.8" stroke="#7ba4c1" stroke-width="2.2"/></svg>
<div style="left:571px;top:875px;width:849px;height:1px;background:#ddd"></div>
<div style="left:579px;top:888.3px;width:12px;height:12px;box-sizing:border-box;border:1px solid #a9a9a9;border-radius:3px;background:linear-gradient(#f4f4f4,#dedede)"></div>
<div style="left:608px;top:891px;width:10px;height:10px;background:#40ae3d;border-radius:50%"></div>
<svg style="left:869px;top:887px" width="100" height="16" viewBox="0 0 100 16"><path transform="translate(0,0)" d="M8 0.8 L10.2 5.6 L15.4 6.2 L11.5 9.8 L12.6 15 L8 12.3 L3.4 15 L4.5 9.8 L0.6 6.2 L5.8 5.6 Z" fill="#ead76e" stroke="#e3cd5a" stroke-width="0.6"/><path transform="translate(20,0)" d="M8 0.8 L10.2 5.6 L15.4 6.2 L11.5 9.8 L12.6 15 L8 12.3 L3.4 15 L4.5 9.8 L0.6 6.2 L5.8 5.6 Z" fill="#ead76e" stroke="#e3cd5a" stroke-width="0.6"/><path transform="translate(40,0)" d="M8 0.8 L10.2 5.6 L15.4 6.2 L11.5 9.8 L12.6 15 L8 12.3 L3.4 15 L4.5 9.8 L0.6 6.2 L5.8 5.6 Z" fill="#fff" stroke="#cfcfcf" stroke-width="1"/><path transform="translate(60,0)" d="M8 0.8 L10.2 5.6 L15.4 6.2 L11.5 9.8 L12.6 15 L8 12.3 L3.4 15 L4.5 9.8 L0.6 6.2 L5.8 5.6 Z" fill="#fff" stroke="#cfcfcf" stroke-width="1"/><path transform="translate(80,0)" d="M8 0.8 L10.2 5.6 L15.4 6.2 L11.5 9.8 L12.6 15 L8 12.3 L3.4 15 L4.5 9.8 L0.6 6.2 L5.8 5.6 Z" fill="#fff" stroke="#cfcfcf" stroke-width="1"/></svg>
<div style="left:992px;top:891px;width:10px;height:10px;background:#40ae3d;border-radius:50%"></div>
<div style="left:1411px;top:323px;width:9px;height:577px;background:linear-gradient(90deg,rgba(0,0,0,0),rgba(0,0,0,.02) 40%,rgba(0,0,0,.09))"></div>
<span class="t" style="left:360.30px;top:32.42px;font-size:23.6px;font-weight:400;color:#fff;letter-spacing:0.942px;-webkit-text-stroke:0.85px #fff;">SendPulse</span>
<span class="t" style="left:368.50px;top:109.15px;font-size:14px;font-weight:700;color:#e3edf3;letter-spacing:0.324px;">Create a campaign</span>
<span class="t" style="left:365.00px;top:168.15px;font-size:14px;font-weight:700;color:#fff;letter-spacing:0.260px;">Mailing lists</span>
<span class="t" style="left:365.00px;top:208.15px;font-size:14px;font-weight:700;color:#e6eff4;letter-spacing:0.251px;">My campaigns</span>
<span class="t" style="left:365.00px;top:248.15px;font-size:14px;font-weight:700;color:#e6eff4;letter-spacing:0.228px;">Reports</span>
<span class="t" style="left:365.00px;top:288.15px;font-size:14px;font-weight:700;color:#e6eff4;letter-spacing:0.426px;">Email templates</span>
<span class="t" style="left:365.00px;top:328.15px;font-size:14px;font-weight:700;color:#e6eff4;letter-spacing:0.540px;">Automations</span>
<span class="t" style="left:365.00px;top:368.15px;font-size:14px;font-weight:700;color:#e6eff4;letter-spacing:0.201px;">A/B tests</span>
<span class="t" style="left:365.00px;top:408.15px;font-size:14px;font-weight:700;color:#e6eff4;letter-spacing:0.230px;">Subscription forms</span>
<span class="t" style="left:365.00px;top:448.15px;font-size:14px;font-weight:700;color:#e6eff4;letter-spacing:0.061px;">Pricing Plans</span>
<span class="t" style="left:365.00px;top:488.15px;font-size:14px;font-weight:700;color:#e6eff4;letter-spacing:0.132px;">Service settings</span>
<span class="t" style="left:579.50px;top:45.15px;font-size:14px;font-weight:700;color:#32b38c;letter-spacing:-0.212px;">EMAIL</span>
<span class="t" style="left:653.00px;top:45.15px;font-size:14px;font-weight:700;color:#737373;letter-spacing:-0.602px;">PUSH</span>
<span class="t" style="left:720.50px;top:45.15px;font-size:14px;font-weight:700;color:#737373;letter-spacing:-0.473px;">SMTP</span>
<span class="t" style="left:1318.50px;top:19.80px;font-size:15px;font-weight:400;color:#777;letter-spacing:-0.336px;">Free</span>
<span class="t" style="left:1316.00px;top:37.80px;font-size:15px;font-weight:700;color:#666;letter-spacing:0.091px;">2 500</span>
<span class="t" style="left:1387.00px;top:29.33px;font-size:23px;font-weight:400;color:#fff;letter-spacing:0.000px;">T</span>
<span class="t" style="left:587.50px;top:136.60px;font-size:15px;font-weight:700;color:#666;letter-spacing:0.078px;">Active</span>
<span class="t" style="left:637.50px;top:137.50px;font-size:13px;font-weight:400;color:#777;letter-spacing:-0.011px;">Created: February 28, 2018 15:12</span>
<span class="t" style="left:602.00px;top:177.15px;font-size:14px;font-weight:700;color:#fff;letter-spacing:0.151px;">Add contacts</span>
<span class="t" style="left:744.50px;top:177.15px;font-size:14px;font-weight:700;color:#2da78a;letter-spacing:0.324px;">Create a campaign</span>
<span class="t" style="left:597.50px;top:234.80px;font-size:15px;font-weight:700;color:#454545;letter-spacing:0.102px;">Contacts</span>
<span class="t" style="left:717.50px;top:234.80px;font-size:15px;font-weight:700;color:#1d8fb3;letter-spacing:0.130px;">Statistics</span>
<span class="t" style="left:839.50px;top:234.80px;font-size:15px;font-weight:700;color:#1d8fb3;letter-spacing:0.162px;">Segments</span>
<span class="t" style="left:605.00px;top:289.51px;font-size:17px;font-weight:700;color:#106aa8;letter-spacing:0.323px;">Filter</span>
<span class="t" style="left:1316.00px;top:289.15px;font-size:14px;font-weight:400;color:#6d7e8c;letter-spacing:0.157px;">Create variable</span>
<span class="t" style="left:609.00px;top:336.50px;font-size:13px;font-weight:700;color:#2b9bb9;letter-spacing:0.065px;">Email address</span>
<span class="t" style="left:869.50px;top:336.50px;font-size:13px;font-weight:700;color:#5d6c78;letter-spacing:0.174px;">Rating</span>
<span class="t" style="left:992.50px;top:336.50px;font-size:13px;font-weight:700;color:#5d6c78;letter-spacing:0.053px;">Phone</span>
<span class="t" style="left:1131.00px;top:336.50px;font-size:13px;font-weight:700;color:#5d6c78;letter-spacing:0.633px;">name</span>
<span class="t" style="left:1222.50px;top:336.50px;font-size:13px;font-weight:700;color:#5d6c78;letter-spacing:0.275px;">first_name</span>
<span class="t" style="left:1328.00px;top:336.50px;font-size:13px;font-weight:700;color:#5d6c78;letter-spacing:0.267px;">last_name</span>
<span class="t" style="left:624.50px;top:379.80px;font-size:15px;font-weight:400;color:#2d9ab8;letter-spacing:0.319px;">useremail@mail.com</span>
<span class="t" style="left:1008.50px;top:379.80px;font-size:15px;font-weight:400;color:#333;letter-spacing:0.158px;">380909090909</span>
<span class="t" style="left:1131.00px;top:379.80px;font-size:15px;font-weight:400;color:#333;letter-spacing:0.450px;">Alexandr</span>
<span class="t" style="left:1131.00px;top:400.80px;font-size:15px;font-weight:400;color:#333;letter-spacing:0.450px;">Tutkevich</span>
<span class="t" style="left:1222.50px;top:379.80px;font-size:15px;font-weight:400;color:#333;letter-spacing:0.450px;">Alexandr</span>
<span class="t" style="left:1328.00px;top:379.80px;font-size:15px;font-weight:400;color:#333;letter-spacing:0.450px;">Tutkevich</span>
<span class="t" style="left:624.50px;top:480.80px;font-size:15px;font-weight:400;color:#2d9ab8;letter-spacing:0.319px;">useremail@mail.com</span>
<span class="t" style="left:1131.00px;top:480.80px;font-size:15px;font-weight:400;color:#333;letter-spacing:0.450px;">Alexandr</span>
<span class="t" style="left:1328.00px;top:480.80px;font-size:15px;font-weight:400;color:#333;letter-spacing:0.450px;">Alexandr</span>
<span class="t" style="left:624.50px;top:581.80px;font-size:15px;font-weight:400;color:#2d9ab8;letter-spacing:0.319px;">useremail@mail.com</span>
<span class="t" style="left:1008.50px;top:581.80px;font-size:15px;font-weight:400;color:#333;letter-spacing:0.158px;">380909090909</span>
<span class="t" style="left:1131.00px;top:581.80px;font-size:15px;font-weight:400;color:#333;letter-spacing:0.450px;">Andrew</span>
<span class="t" style="left:1131.00px;top:602.80px;font-size:15px;font-weight:400;color:#333;letter-spacing:0.450px;">Test</span>
<span class="t" style="left:1222.50px;top:581.80px;font-size:15px;font-weight:400;color:#333;letter-spacing:0.450px;">Andrew</span>
<span class="t" style="left:1328.00px;top:581.80px;font-size:15px;font-weight:400;color:#333;letter-spacing:0.450px;">Test</span>
<span class="t" style="left:624.50px;top:682.80px;font-size:15px;font-weight:400;color:#2d9ab8;letter-spacing:0.409px;">nedstark@winteriscoming.com</span>
<span class="t" style="left:1008.50px;top:682.80px;font-size:15px;font-weight:400;color:#333;letter-spacing:0.158px;">380909090909</span>
<span class="t" style="left:1131.00px;top:682.80px;font-size:15px;font-weight:400;color:#333;letter-spacing:0.450px;">Ned</span>
<span class="t" style="left:1131.00px;top:703.80px;font-size:15px;font-weight:400;color:#333;letter-spacing:0.450px;">Stark2</span>
<span class="t" style="left:1222.50px;top:682.80px;font-size:15px;font-weight:400;color:#333;letter-spacing:0.450px;">Ned</span>
<span class="t" style="left:1328.00px;top:682.80px;font-size:15px;font-weight:400;color:#333;letter-spacing:0.450px;">Stark2</span>
<span class="t" style="left:624.50px;top:783.80px;font-size:15px;font-weight:400;color:#2d9ab8;letter-spacing:0.276px;">ballen@ballen.com</span>
<span class="t" style="left:1131.00px;top:783.80px;font-size:15px;font-weight:400;color:#333;letter-spacing:0.450px;">Brad</span>
<span class="t" style="left:1131.00px;top:804.80px;font-size:15px;font-weight:400;color:#333;letter-spacing:0.450px;">Allen2</span>
<span class="t" style="left:1222.50px;top:783.80px;font-size:15px;font-weight:400;color:#333;letter-spacing:0.450px;">Brad</span>
<span class="t" style="left:1328.00px;top:783.80px;font-size:15px;font-weight:400;color:#333;letter-spacing:0.450px;">Allen2</span>
<span class="t" style="left:624.50px;top:884.80px;font-size:15px;font-weight:400;color:#2d9ab8;letter-spacing:0.345px;">max@dempsey.com</span>
<span class="t" style="left:1008.50px;top:884.80px;font-size:15px;font-weight:400;color:#333;letter-spacing:0.106px;">5555550143</span>
<span class="t" style="left:1131.00px;top:884.80px;font-size:15px;font-weight:400;color:#333;letter-spacing:0.450px;">Maxwell</span>
<span class="t" style="left:1222.50px;top:884.80px;font-size:15px;font-weight:400;color:#333;letter-spacing:0.450px;">Maxwell</span>
<span class="t" style="left:1328.00px;top:884.80px;font-size:15px;font-weight:400;color:#333;letter-spacing:0.450px;">Demp2sey</span>
</div>
<div class="l">
<div style="left:23px;top:179px;width:260px;height:55px;box-sizing:border-box;border:3px solid #fb5a5f;border-radius:5px;background:#fff;box-shadow:0 9px 28px rgba(0,0,0,.26);"></div>
<div style="left:548px;top:95px;width:216px;height:47px;box-sizing:border-box;border:3px solid #fb5a5f;border-radius:5px;background:#fff;"></div>
<svg style="left:731px;top:113px" width="19" height="18" viewBox="0 0 19 18"><path d="M13.2 1.2 L17 5 L6.6 15.4 L2.8 11.6 Z" fill="#2196ba"/><path d="M2.2 12.6 L5.6 16 L0.8 17.4 Z" fill="#1f8fb3"/><path d="M12 3.2 L15 6.2" stroke="#fff" stroke-width="0.9"/></svg>
<div style="left:1104px;top:362px;width:139px;height:81px;box-sizing:border-box;border:3px solid #fb5a5f;border-radius:5px;background:#fff;box-shadow:0 9px 28px rgba(0,0,0,.26);"></div>
<svg style="left:0;top:0" width="1440" height="900" viewBox="0 0 1440 900"><path d="M282.0 193.7 L288.8 191.6 L295.7 189.6 L302.5 187.5 L309.4 185.3 L316.2 183.2 L323.1 181.0 L329.9 178.8 L336.8 176.6 L343.6 174.4 L350.5 172.2 L357.3 170.0 L364.2 167.7 L371.0 165.5 L377.8 163.3 L384.7 161.1 L391.5 158.8 L398.4 156.7 L405.2 154.5 L412.1 152.3 L418.9 150.2 L425.8 148.1 L432.6 146.0 L439.5 144.0 L446.3 141.9 L453.2 140.0 L460.0 138.0 L466.8 136.1 L473.7 134.3 L480.5 132.5 L487.4 130.8 L494.2 129.1 L501.1 127.5 L507.9 125.9 L514.8 124.4 L521.6 123.0 L528.5 121.7 L535.3 120.4 L542.2 119.2 L549.0 118.1" fill="none" stroke="#fb5a5f" stroke-width="4.5"/><path d="M763.0 118.6 L771.7 120.4 L780.4 122.4 L789.2 124.4 L797.9 126.7 L806.6 129.1 L815.3 131.7 L824.0 134.5 L832.7 137.4 L841.5 140.6 L850.2 144.0 L858.9 147.5 L867.6 151.3 L876.3 155.3 L885.1 159.5 L893.8 164.0 L902.5 168.6 L911.2 173.6 L919.9 178.8 L928.6 184.2 L937.4 189.9 L946.1 195.9 L954.8 202.1 L963.5 208.6 L972.2 215.4 L980.9 222.5 L989.7 229.9 L998.4 237.7 L1007.1 245.7 L1015.8 254.0 L1024.5 262.7 L1033.3 271.7 L1042.0 281.0 L1050.7 290.7 L1059.4 300.7 L1068.1 311.1 L1076.8 321.9 L1085.6 333.0 L1094.3 344.5 L1103.0 356.3" fill="none" stroke="#fb5a5f" stroke-width="4.0"/><path d="M315.5 183.4 Q305.2 182.3 294.2 179.1 L304.5 186.9 L300.5 199.1 Q307.7 190.3 315.5 183.4Z" fill="#fb5a5f"/><path d="M455.5 139.3 Q445.2 137.8 434.4 134.4 L444.4 142.4 L440.1 154.6 Q447.5 145.9 455.5 139.3Z" fill="#fb5a5f"/><path d="M912.5 174.3 Q906.1 166.1 900.7 156.1 L902.4 168.9 L890.8 174.6 Q902.1 173.5 912.5 174.3Z" fill="#fb5a5f"/><path d="M1035.5 274.1 Q1032.0 264.3 1030.1 253.0 L1027.6 265.7 L1014.8 267.4 Q1025.9 270.0 1035.5 274.1Z" fill="#fb5a5f"/><path d="M1108.8 364.4 Q1105.9 354.4 1104.7 343.1 L1101.4 355.6 L1088.6 356.6 Q1099.5 359.8 1108.8 364.4Z" fill="#fb5a5f"/></svg>
<span class="t" style="left:52.70px;top:195.97px;font-size:20px;font-weight:400;color:#2e2e2e;letter-spacing:0.445px;">Alexandr Tutkevich</span>
<span class="t" style="left:572.50px;top:108.30px;font-size:28px;font-weight:700;color:#2b2b2b;letter-spacing:0.609px;">Mailing list</span>
<span class="t" style="left:1129.50px;top:377.14px;font-size:19.5px;font-weight:400;color:#2e2e2e;letter-spacing:0.079px;">Alexandr</span>
<span class="t" style="left:1130.00px;top:403.14px;font-size:19.5px;font-weight:400;color:#2e2e2e;letter-spacing:-0.059px;">Tutkevich</span>
</div>
</body></html>
